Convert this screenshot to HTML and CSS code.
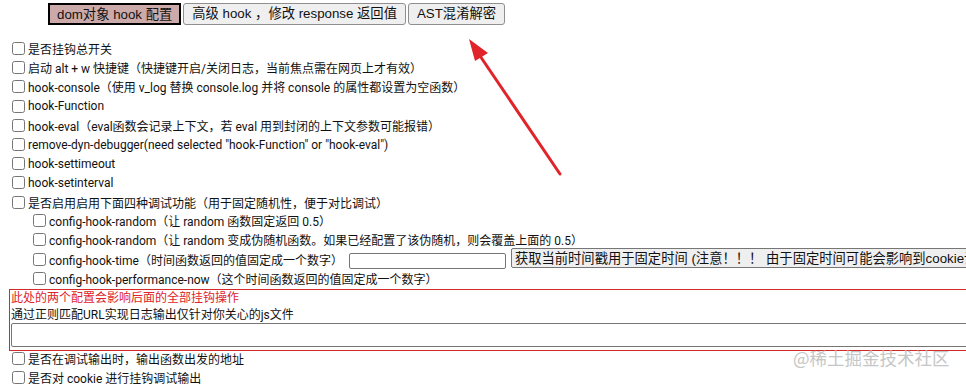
FILE: index.html
```html
<!DOCTYPE html>
<html lang="zh">
<head>
<meta charset="utf-8">
<link rel="stylesheet" href="styles.css">
</head>
<body>
<div class="page">
  <div class="tabs">
    <button class="tab tab-active">dom对象 hook 配置</button>
    <button class="tab">高级 hook ，修改 response 返回值</button>
    <button class="tab">AST混淆解密</button>
  </div>
  <div class="options">
    <label class="row"><input type="checkbox"><span>是否挂钩总开关</span></label>
    <label class="row"><input type="checkbox"><span>启动 alt + w 快捷键（快捷键开启/关闭日志，当前焦点需在网页上才有效）</span></label>
    <label class="row"><input type="checkbox"><span>hook-console（使用 v_log 替换 console.log 并将 console 的属性都设置为空函数）</span></label>
    <label class="row"><input type="checkbox"><span>hook-Function</span></label>
    <label class="row"><input type="checkbox"><span>hook-eval（eval函数会记录上下文，若 eval 用到封闭的上下文参数可能报错）</span></label>
    <label class="row"><input type="checkbox"><span>remove-dyn-debugger(need selected "hook-Function" or "hook-eval")</span></label>
    <label class="row"><input type="checkbox"><span>hook-settimeout</span></label>
    <label class="row"><input type="checkbox"><span>hook-setinterval</span></label>
    <label class="row"><input type="checkbox"><span>是否启用启用下面四种调试功能（用于固定随机性，便于对比调试）</span></label>
    <div class="sub">
      <label class="row"><input type="checkbox"><span>config-hook-random（让 random 函数固定返回 0.5）</span></label>
      <label class="row"><input type="checkbox"><span>config-hook-random（让 random 变成伪随机函数。如果已经配置了该伪随机，则会覆盖上面的 0.5）</span></label>
      <div class="row row-time">
        <input type="checkbox"><span>config-hook-time（时间函数返回的值固定成一个数字）</span>
        <input type="text" class="time-input">
        <button class="time-btn">获取当前时间戳用于固定时间 (注意！！！ 由于固定时间可能会影响到cookie设置的过期时间，请谨慎使用)</button>
      </div>
      <label class="row"><input type="checkbox"><span>config-hook-performance-now（这个时间函数返回的值固定成一个数字）</span></label>
    </div>
  </div>
  <div class="scope-box">
    <div class="warn">此处的两个配置会影响后面的全部挂钩操作</div>
    <div class="scope-label">通过正则匹配URL实现日志输出仅针对你关心的js文件</div>
    <input type="text" class="url-input">
  </div>
  <div class="options options-tail">
    <label class="row"><input type="checkbox"><span>是否在调试输出时，输出函数出发的地址</span></label>
    <label class="row"><input type="checkbox"><span>是否对 cookie 进行挂钩调试输出</span></label>
  </div>
  <svg class="arrow" width="120" height="150" viewBox="0 0 120 150">
    <line x1="108" y1="148" x2="24" y2="24" stroke="#e0242a" stroke-width="3" stroke-linecap="round"/>
    <polygon points="17,13 36,27 23,35" fill="#e0242a"/>
  </svg>
  <div class="watermark">@稀土掘金技术社区</div>
</div>
</body>
</html>
```
FILE: styles.css
```css
html, body {
  margin: 0;
  padding: 0;
  overflow: hidden;
  background: #fff;
}
body {
  font-family: "Roboto", "Noto Sans CJK SC", sans-serif;
  font-size: 12px;
  color: #111;
}
.page {
  position: relative;
  width: 1300px;
  height: 384px;
  padding: 3px 0 0 8px;
  box-sizing: border-box;
}
.tabs {
  display: flex;
  gap: 2px;
  margin-left: 40px;
}
.tab {
  font-family: "Liberation Sans", "Noto Sans CJK SC", sans-serif;
  font-size: 13.3px;
  color: #111;
  height: 22px;
  padding: 0 8px;
  background: #efefef;
  border: 1px solid #8f8f8f;
  border-radius: 3px;
  line-height: 20px;
}
.tab-active {
  background: #cdaaaa;
  border: 2px solid #000;
  border-radius: 0;
  padding: 0 7px;
}
.options {
  display: flex;
  flex-direction: column;
}
.tabs + .options {
  margin-top: 14px;
}
.row {
  display: flex;
  align-items: center;
  height: 19.2px;
  white-space: nowrap;
}
.row input[type="checkbox"] {
  width: 13px;
  height: 13px;
  margin: 0 3px 0 4px;
}
.sub {
  margin-left: 21px;
  margin-top: -1px;
}
.row-time {
  height: 20px;
}
.time-input {
  width: 153px;
  height: 14px;
  margin: 3px 0 0 6px;
  border: 1px solid #767676;
  border-radius: 2px;
  padding: 0 1px;
}
.time-btn {
  font-family: "Liberation Sans", "Noto Sans CJK SC", sans-serif;
  font-size: 13.3px;
  color: #111;
  margin: -2px 0 0 5px;
  height: 20px;
  line-height: 17px;
  padding: 0 3px;
  background: #efefef;
  border: 1px solid #767676;
  border-radius: 2px;
  white-space: nowrap;
}
.scope-box {
  margin: 1px 0 0 1px;
  border: 1px solid #d42a2a;
  padding: 0 0 3px 1px;
  display: flex;
  flex-direction: column;
}
.warn {
  color: #e0242a;
  line-height: 17px;
}
.scope-label {
  line-height: 16px;
}
.url-input {
  box-sizing: border-box;
  height: 24px;
  border: 1px solid #767676;
  border-radius: 2px;
  margin: 0;
  padding: 0 2px;
}
.options-tail .row {
  height: 19.5px;
}
.options-tail {
  margin-top: -3px;
}
.arrow {
  position: absolute;
  left: 452px;
  top: 26px;
}
.watermark {
  position: absolute;
  left: 793px;
  top: 345px;
  font-family: "Noto Sans CJK SC", sans-serif;
  font-size: 17.5px;
  color: #c6c6c6;
}
```
